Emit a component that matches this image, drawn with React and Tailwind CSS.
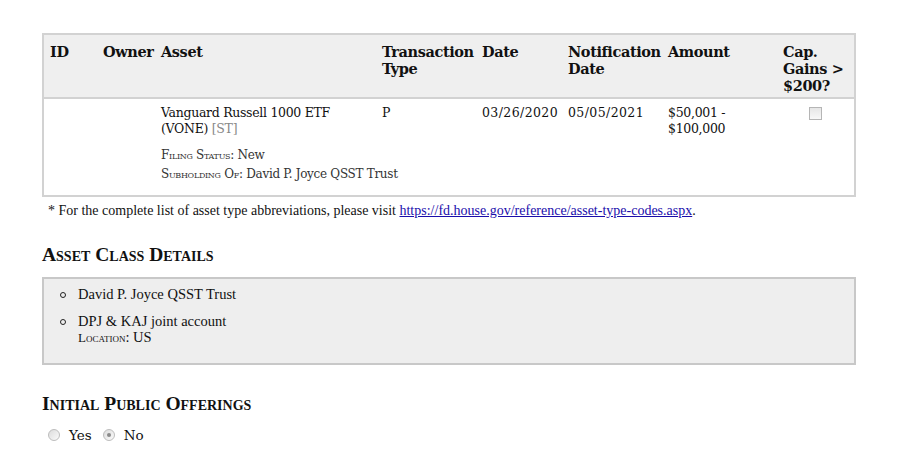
import React from 'react';

const serif = { fontFamily: '"DejaVu Serif", Georgia, serif' };
const times = { fontFamily: '"Liberation Serif", "Times New Roman", serif' };
const caps = { fontVariant: 'small-caps' };

const Radio = ({ checked }) => (
    <span className="inline-block w-[12px] h-[12px] rounded-full border border-[#bdbdbd] bg-gradient-to-br from-[#dcdcdc] to-[#fbfbfb] relative">
        {checked && <span className="absolute left-[3px] top-[3px] w-[4px] h-[4px] rounded-full bg-[#8a8a8a]"></span>}
    </span>
);

const App = () => {
    return (
        <div className="w-[923px] h-[465px] bg-white overflow-hidden text-[#111]">
            <div className="pl-[42px] pr-[67px] pt-[33px]">
                {/* Transactions table */}
                <table className="w-full table-fixed border-2 border-[#d2d2d2] border-collapse text-[13px] leading-[17px]" style={serif}>
                    <colgroup>
                        <col className="w-[54px]" />
                        <col className="w-[60px]" />
                        <col className="w-[221px]" />
                        <col className="w-[100px]" />
                        <col className="w-[86px]" />
                        <col className="w-[100px]" />
                        <col className="w-[113px]" />
                        <col />
                    </colgroup>
                    <thead>
                        <tr className="bg-[#efefef] border-b-2 border-[#d2d2d2] h-[64px] align-top text-left font-bold text-[14.5px] tracking-[-0.4px]">
                            <th className="pl-[6px] pt-[8px]">ID</th>
                            <th className="pl-[6px] pt-[8px]">Owner</th>
                            <th className="pl-[4px] pt-[8px]">Asset</th>
                            <th className="pl-[4px] pt-[8px]">Transaction Type</th>
                            <th className="pl-[4px] pt-[8px]">Date</th>
                            <th className="pl-[4px] pt-[8px] whitespace-nowrap">Notification<br />Date</th>
                            <th className="pl-[4px] pt-[8px]">Amount</th>
                            <th className="pl-[6px] pt-[8px]">Cap. Gains &gt; $200?</th>
                        </tr>
                    </thead>
                    <tbody>
                        <tr className="align-top h-[98px] text-[12.5px] leading-[16px] tracking-[-0.3px]">
                            <td></td>
                            <td></td>
                            <td className="pl-[4px] pt-[6px]">
                                <div>Vanguard Russell 1000 ETF<br />(VONE) <span className="text-[#888]">[ST]</span></div>
                                <div className="mt-[9px] text-[12px] leading-[19px] text-[#333] whitespace-nowrap">
                                    <div><span style={caps}>Filing Status</span>: New</div>
                                    <div><span style={caps}>Subholding Of</span>: David P. Joyce QSST Trust</div>
                                </div>
                            </td>
                            <td className="pl-[4px] pt-[6px]">P</td>
                            <td className="pl-[4px] pt-[6px] tracking-[0.4px]">03/26/2020</td>
                            <td className="pl-[4px] pt-[6px] tracking-[0.4px]">05/05/2021</td>
                            <td className="pl-[4px] pt-[6px]">$50,001 - $100,000</td>
                            <td className="pt-[8px] text-center">
                                <span className="inline-block w-[13px] h-[13px] border border-[#b5b5b5] bg-gradient-to-b from-[#e6e6e6] to-[#f8f8f8]"></span>
                            </td>
                        </tr>
                    </tbody>
                </table>

                <p className="mt-[6px] pl-[6px] text-[14px] leading-[16px]" style={times}>
                    * For the complete list of asset type abbreviations, please visit{' '}
                    <a className="text-[#1a0dab] underline">https://fd.house.gov/reference/asset-type-codes.aspx</a>.
                </p>

                {/* Asset class details */}
                <h2 className="mt-[25px] text-[19.5px] leading-[22px] font-bold" style={{ ...times, ...caps }}>
                    Asset Class Details
                </h2>
                <div className="mt-[11px] border-2 border-[#c8c8c8] bg-[#eeeeee] h-[88px] pt-[7px] pl-[16px] text-[14.5px] leading-[16px]" style={times}>
                    <ul className="flex flex-col gap-[11px]">
                        <li className="flex items-start">
                            <span className="inline-block w-[6px] h-[6px] rounded-full border border-[#222] mt-[6px] mr-[12px]"></span>
                            <span>David P. Joyce QSST Trust</span>
                        </li>
                        <li className="flex items-start">
                            <span className="inline-block w-[6px] h-[6px] rounded-full border border-[#222] mt-[6px] mr-[12px]"></span>
                            <div>
                                <div>DPJ &amp; KAJ joint account</div>
                                <div><span className="text-[13px]" style={caps}>Location</span>: US</div>
                            </div>
                        </li>
                    </ul>
                </div>

                {/* IPOs */}
                <h2 className="mt-[28px] text-[19.5px] leading-[22px] font-bold" style={{ ...times, ...caps }}>
                    Initial Public Offerings
                </h2>
                <div className="mt-[10px] pl-[6px] flex items-center text-[13.5px]" style={serif}>
                    <Radio />
                    <span className="ml-[9px] mr-[11px]">Yes</span>
                    <Radio checked />
                    <span className="ml-[9px]">No</span>
                </div>
            </div>
        </div>
    );
};

export default App;
